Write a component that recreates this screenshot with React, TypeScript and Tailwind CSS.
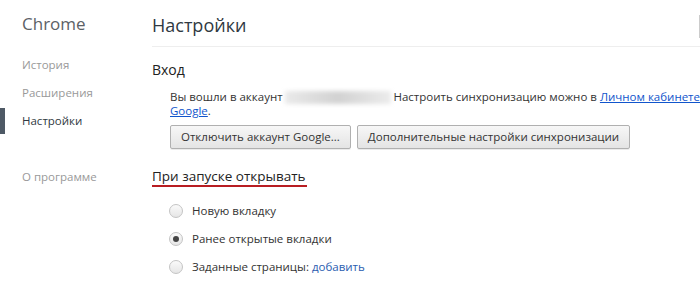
import { ReactNode } from 'react';

function NavItem({ label, active }: { label: string; active?: boolean }) {
  return (
    <div className="relative h-[28px] flex items-center pl-[22px]">
      {active && <div className="absolute left-0 top-[1px] h-[26px] w-[5px] bg-[#4e5965]" />}
      <span className={active ? 'text-[#303942]' : 'text-[#999]'}>{label}</span>
    </div>
  );
}

function Button({ children }: { children: ReactNode }) {
  return (
    <button className="h-[24px] px-[10px] rounded-[2px] border border-[#b0b0b0] bg-gradient-to-b from-[#f7f7f7] to-[#e4e4e4] text-[#333] shadow-[0_1px_0_rgba(0,0,0,0.08)]">
      {children}
    </button>
  );
}

function Radio({ label, checked, extra }: { label: string; checked?: boolean; extra?: ReactNode }) {
  return (
    <div className="h-[28px] flex items-center gap-[9px] pl-[17px]">
      <span className="w-[14px] h-[14px] rounded-full border border-[#c4c4c4] bg-gradient-to-b from-[#fafafa] to-[#e6e6e6] flex items-center justify-center">
        {checked && <span className="w-[6px] h-[6px] rounded-full bg-[#444]" />}
      </span>
      <span className="text-[#333]">
        {label}
        {extra}
      </span>
    </div>
  );
}

export default function App() {
  return (
    <div className="w-[700px] h-[298px] overflow-hidden bg-white flex font-['Open_Sans',sans-serif] text-[11.5px]">
      <aside className="w-[152px] shrink-0 pt-[11px]">
        <div className="pl-[22px] text-[17px] text-[#5c6166] h-[26px] leading-[26px]">Chrome</div>
        <div className="mt-[14px]">
          <NavItem label="История" />
          <NavItem label="Расширения" />
          <NavItem label="Настройки" active />
          <div className="h-[28px]" />
          <NavItem label="О программе" />
        </div>
      </aside>
      <main className="flex-1 min-w-0 pt-[12px]">
        <div className="flex items-stretch border-b border-[#eeeeee] pb-[8px]">
          <h1 className="text-[18px] text-[#303942] leading-[26px] flex-1">Настройки</h1>
          <div className="w-[1px] bg-[#ccc] mt-[3px]" />
        </div>
        <section className="mt-[14px]">
          <h2 className="text-[14px] text-[#222] leading-[18px]">Вход</h2>
          <div className="pl-[18px] mt-[11px] text-[#333] leading-[14px]">
            <div className="whitespace-nowrap flex items-center">
              <span>Вы вошли в аккаунт </span>
              <span className="inline-block w-[126px] h-[13px] mx-[2px] bg-gradient-to-r from-[#eaeaea] via-[#d2d2d2] to-[#ececec] blur-[2px]" />
              <span>
                {' '}Настроить синхронизацию можно в{' '}
                <a className="text-[#15c] underline">Личном кабинете</a>
              </span>
            </div>
            <div>
              <a className="text-[#15c] underline">Google</a>.
            </div>
            <div className="flex gap-[6px] mt-[7px]">
              <Button>Отключить аккаунт Google...</Button>
              <Button>Дополнительные настройки синхронизации</Button>
            </div>
          </div>
        </section>
        <section className="mt-[18px]">
          <h2 className="inline-block text-[13.5px] text-[#222] leading-[18px] border-b-2 border-[#b81d22] pr-[1px]">
            При запуске открывать
          </h2>
          <div className="mt-[10px]">
            <Radio label="Новую вкладку" />
            <Radio label="Ранее открытые вкладки" checked />
            <Radio label="Заданные страницы: " extra={<a className="text-[#2a5db0]">добавить</a>} />
          </div>
        </section>
      </main>
    </div>
  );
}
